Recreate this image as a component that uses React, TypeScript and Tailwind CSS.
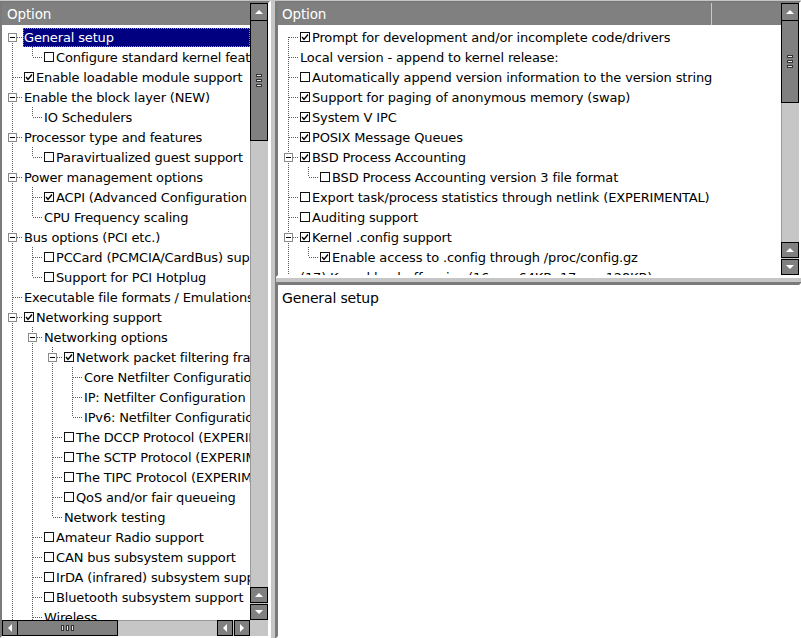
import React from 'react';

type Item = { label: string; check?: 'on' | 'off'; selected?: boolean; children?: Item[] };
type Row = { item: Item; guides: boolean[]; first: boolean; last: boolean };

const leftTree: Item[] = [
  { label: 'General setup', selected: true, children: [{ label: 'Configure standard kernel features (for small systems)', check: 'off' }] },
  { label: 'Enable loadable module support', check: 'on' },
  { label: 'Enable the block layer (NEW)', children: [{ label: 'IO Schedulers' }] },
  { label: 'Processor type and features', children: [{ label: 'Paravirtualized guest support', check: 'off' }] },
  {
    label: 'Power management options',
    children: [
      { label: 'ACPI (Advanced Configuration and Power Interface) Support', check: 'on' },
      { label: 'CPU Frequency scaling' },
    ],
  },
  {
    label: 'Bus options (PCI etc.)',
    children: [
      { label: 'PCCard (PCMCIA/CardBus) support', check: 'off' },
      { label: 'Support for PCI Hotplug', check: 'off' },
    ],
  },
  { label: 'Executable file formats / Emulations' },
  {
    label: 'Networking support',
    check: 'on',
    children: [
      {
        label: 'Networking options',
        children: [
          {
            label: 'Network packet filtering framework (Netfilter)',
            check: 'on',
            children: [
              { label: 'Core Netfilter Configuration' },
              { label: 'IP: Netfilter Configuration' },
              { label: 'IPv6: Netfilter Configuration' },
            ],
          },
          { label: 'The DCCP Protocol (EXPERIMENTAL)', check: 'off' },
          { label: 'The SCTP Protocol (EXPERIMENTAL)', check: 'off' },
          { label: 'The TIPC Protocol (EXPERIMENTAL)', check: 'off' },
          { label: 'QoS and/or fair queueing', check: 'off' },
          { label: 'Network testing' },
        ],
      },
      { label: 'Amateur Radio support', check: 'off' },
      { label: 'CAN bus subsystem support', check: 'off' },
      { label: 'IrDA (infrared) subsystem support', check: 'off' },
      { label: 'Bluetooth subsystem support', check: 'off' },
      { label: 'Wireless' },
      { label: 'RF switch subsystem support', check: 'off' },
    ],
  },
  { label: 'Device Drivers' },
  { label: 'File systems' },
];

const rightTree: Item[] = [
  { label: 'Prompt for development and/or incomplete code/drivers', check: 'on' },
  { label: 'Local version - append to kernel release:' },
  { label: 'Automatically append version information to the version string', check: 'off' },
  { label: 'Support for paging of anonymous memory (swap)', check: 'on' },
  { label: 'System V IPC', check: 'on' },
  { label: 'POSIX Message Queues', check: 'on' },
  { label: 'BSD Process Accounting', check: 'on', children: [{ label: 'BSD Process Accounting version 3 file format', check: 'off' }] },
  { label: 'Export task/process statistics through netlink (EXPERIMENTAL)', check: 'off' },
  { label: 'Auditing support', check: 'off' },
  { label: 'Kernel .config support', check: 'on', children: [{ label: 'Enable access to .config through /proc/config.gz', check: 'on' }] },
  { label: '(17) Kernel log buffer size (16 => 64KB, 17 => 128KB)' },
  { label: 'Create deprecated sysfs files', check: 'on' },
];

function flatten(items: Item[], guides: boolean[], out: Row[]) {
  items.forEach((item, i) => {
    const last = i === items.length - 1;
    out.push({ item, guides, first: guides.length === 0 && i === 0, last });
    if (item.children) flatten(item.children, [...guides, !last], out);
  });
  return out;
}

const DOT = '#5a5a5a';

const Guide = ({ on }: { on: boolean }) => (
  <svg width="20" height="20" className="shrink-0">
    {on && <line x1="10.5" y1="0" x2="10.5" y2="20" stroke={DOT} strokeDasharray="1 1" />}
  </svg>
);

const Own = ({ row }: { row: Row }) => {
  const exp = !!row.item.children;
  return (
    <svg width="20" height="20" className="shrink-0">
      {!row.first && <line x1="10.5" y1="0" x2="10.5" y2="10" stroke={DOT} strokeDasharray="1 1" />}
      {!row.last && <line x1="10.5" y1="10" x2="10.5" y2="20" stroke={DOT} strokeDasharray="1 1" />}
      <line x1={exp ? 15 : 11} y1="10.5" x2="20" y2="10.5" stroke={DOT} strokeDasharray="1 1" />
      {exp && (
        <g>
          <rect x="6.5" y="6.5" width="8" height="8" fill="#fff" stroke="#8a8a8a" />
          <line x1="8" y1="10.5" x2="13" y2="10.5" stroke="#000" />
        </g>
      )}
    </svg>
  );
};

const Check = ({ on }: { on: boolean }) => (
  <svg width="10" height="10" className="ml-[2px] shrink-0">
    <rect x="0.5" y="0.5" width="9" height="9" fill="#fff" stroke="#111" />
    {on && <polyline points="2,5 4,7.5 8,2.5" fill="none" stroke="#000" strokeWidth="1.4" />}
  </svg>
);

const Tree = ({ items }: { items: Item[] }) => {
  const rows = flatten(items, [], []);
  return (
    <div className="flex flex-col pt-[2px]">
      {rows.map((r, i) => (
        <div key={i} className="flex h-[20px] shrink-0 items-center whitespace-nowrap">
          {r.guides.map((g, j) => (
            <Guide key={j} on={g} />
          ))}
          <Own row={r} />
          {r.item.check && <Check on={r.item.check === 'on'} />}
          {r.item.selected ? (
            <span className="ml-[1px] flex h-[19px] flex-1 items-center bg-[#000080] pt-[2px] pl-[1px] text-white outline-1 outline-dotted outline-offset-[-1px] outline-[#8080ff]">
              {r.item.label}
            </span>
          ) : (
            <span className="ml-[2px] pt-[2px]">{r.item.label}</span>
          )}
        </div>
      ))}
    </div>
  );
};

const Arrow = ({ dir }: { dir: 'up' | 'down' | 'left' | 'right' }) => {
  const pts = { up: '1,7 9,7 5,3', down: '1,3 9,3 5,7', left: '7,1 7,9 3,5', right: '3,1 3,9 7,5' }[dir];
  return (
    <svg width="10" height="10">
      <polygon points={pts} fill="#fff" />
    </svg>
  );
};

const GripV = () => (
  <svg width="8" height="14">
    {[0.5, 5.5, 10.5].map((y) => (
      <rect key={y} x="1.5" y={y} width="5" height="2" fill="#e8e8e8" stroke="#333" />
    ))}
  </svg>
);

const GripH = () => (
  <svg width="14" height="8">
    {[0.5, 5.5, 10.5].map((x) => (
      <rect key={x} x={x} y="1.5" width="2" height="5" fill="#e8e8e8" stroke="#333" />
    ))}
  </svg>
);

const VScroll = ({ thumb }: { thumb: 'left' | 'right' }) => (
  <div className="flex w-[18px] shrink-0 flex-col bg-[#c6c6c6]">
    <div className="flex h-[18px] shrink-0 items-center justify-center border border-black bg-[#808080]">
      <Arrow dir="up" />
    </div>
    <div
      className={
        thumb === 'left'
          ? 'flex h-[120px] shrink-0 items-center justify-center border border-t-0 border-black bg-[#808080]'
          : 'flex h-[82px] shrink-0 items-center justify-center border border-t-0 border-black bg-[#808080]'
      }
    >
      <GripV />
    </div>
    <div className="flex-1 border-l border-[#9a9a9a]" />
    <div className="flex h-[16px] shrink-0 items-center justify-center border border-black bg-[#808080]">
      <Arrow dir="up" />
    </div>
    <div className="mt-[1px] flex h-[16px] shrink-0 items-center justify-center border border-black bg-[#808080]">
      <Arrow dir="down" />
    </div>
  </div>
);

const HScroll = () => (
  <div className="flex h-[16px] shrink-0">
    <div className="flex flex-1 bg-[#c6c6c6]">
      <div className="flex w-[16px] shrink-0 items-center justify-center border border-black bg-[#808080]">
        <Arrow dir="left" />
      </div>
      <div className="flex w-[100px] shrink-0 items-center justify-center border border-l-0 border-black bg-[#808080]">
        <GripH />
      </div>
      <div className="flex-1 border-t border-[#9a9a9a]" />
      <div className="flex w-[16px] shrink-0 items-center justify-center border border-black bg-[#808080]">
        <Arrow dir="left" />
      </div>
      <div className="ml-[1px] flex w-[16px] shrink-0 items-center justify-center border border-black bg-[#808080]">
        <Arrow dir="right" />
      </div>
    </div>
    <div className="w-[18px] shrink-0 bg-[#c6c6c6]" />
  </div>
);

export default function App() {
  return (
    <div className="flex h-[638px] w-[801px] bg-[#c6c6c6] pt-[1px] font-['DejaVu_Sans',Verdana,sans-serif] text-[13px] tracking-[-0.15px] text-black">
      {/* left: menu tree */}
      <div className="flex w-[270px] shrink-0 flex-col border-2 border-t-[#7a7a7a] border-r-white border-b-white border-l-[#7a7a7a]">
        <div className="flex min-h-0 flex-1">
          <div className="flex min-w-0 flex-1 flex-col overflow-hidden bg-white">
            <div className="flex h-[22px] shrink-0 items-center bg-[#808080] pl-[5px] text-[13.5px] text-white">Option</div>
            <Tree items={leftTree} />
          </div>
          <VScroll thumb="left" />
        </div>
        <HScroll />
      </div>

      {/* vertical splitter */}
      <div className="w-[6px] shrink-0 border-r border-l border-r-[#7a7a7a] border-l-white bg-[#c6c6c6]" />

      {/* right side */}
      <div className="flex min-w-0 flex-1 flex-col">
        <div className="flex h-[276px] shrink-0 border-2 border-t-[#7a7a7a] border-r-white border-b-white border-l-[#7a7a7a]">
          <div className="flex min-w-0 flex-1 flex-col overflow-hidden bg-white">
            <div className="flex h-[22px] shrink-0 bg-[#808080] text-[13.5px] text-white">
              <div className="flex w-[434px] shrink-0 items-center border-r border-r-[#c8c8c8] pl-[4px]">Option</div>
              <div className="flex-1" />
            </div>
            <Tree items={rightTree} />
          </div>
          <VScroll thumb="right" />
        </div>

        {/* horizontal splitter */}
        <div className="h-[6px] shrink-0 border-t border-b border-t-white border-b-[#7a7a7a] bg-[#c6c6c6]" />

        <div className="min-h-0 flex-1 border-2 border-t-[#7a7a7a] border-r-white border-b-white border-l-[#7a7a7a] bg-white pt-[3px] pl-[4px] text-[14px]">
          General setup
        </div>
      </div>
    </div>
  );
}
